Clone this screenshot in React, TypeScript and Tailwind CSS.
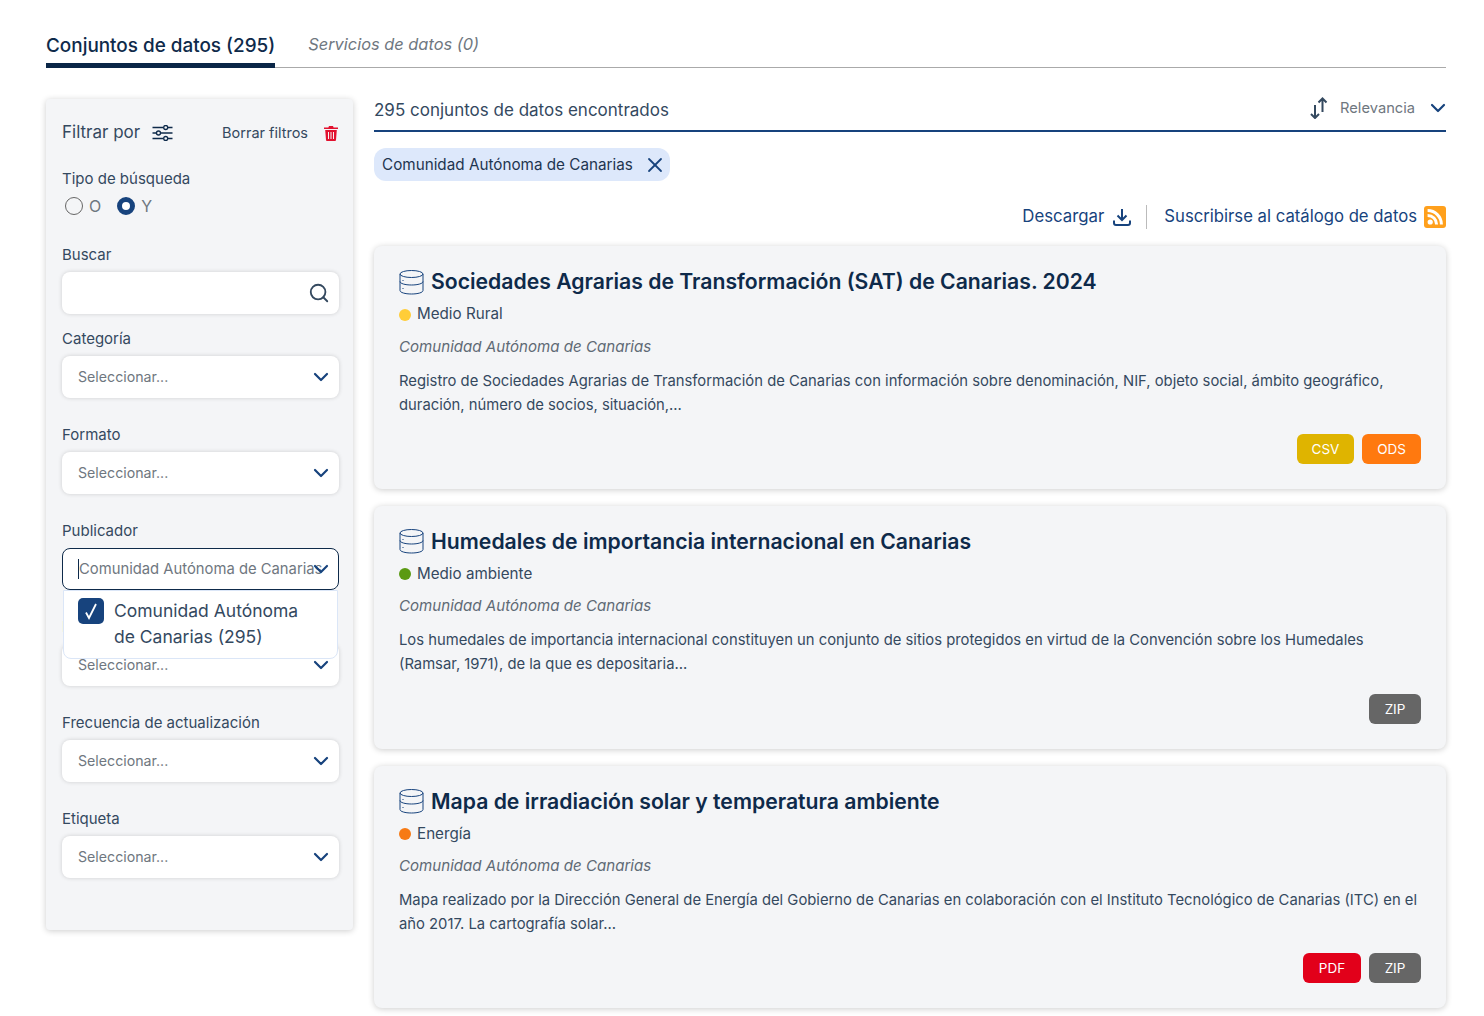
import { ChevronDown, Search, X } from "lucide-react";

const datasets = [
  {
    title: "Sociedades Agrarias de Transformación (SAT) de Canarias. 2024",
    category: "Medio Rural",
    dot: "bg-[#ffcd38]",
    desc: "Registro de Sociedades Agrarias de Transformación de Canarias con información sobre denominación, NIF, objeto social, ámbito geográfico, duración, número de socios, situación,...",
    formats: [
      { label: "CSV", color: "bg-[#dfb400]", width: "w-[57px]" },
      { label: "ODS", color: "bg-[#ff790f]", width: "w-[59px]" },
    ],
  },
  {
    title: "Humedales de importancia internacional en Canarias",
    category: "Medio ambiente",
    dot: "bg-[#5b9a12]",
    desc: "Los humedales de importancia internacional constituyen un conjunto de sitios protegidos en virtud de la Convención sobre los Humedales (Ramsar, 1971), de la que es depositaria...",
    formats: [{ label: "ZIP", color: "bg-[#666666]", width: "w-[52px]" }],
  },
  {
    title: "Mapa de irradiación solar y temperatura ambiente",
    category: "Energía",
    dot: "bg-[#f77a14]",
    desc: "Mapa realizado por la Dirección General de Energía del Gobierno de Canarias en colaboración con el Instituto Tecnológico de Canarias (ITC) en el año 2017. La cartografía solar...",
    formats: [
      { label: "PDF", color: "bg-[#e2001a]", width: "w-[58px]" },
      { label: "ZIP", color: "bg-[#666666]", width: "w-[52px]" },
    ],
  },
];

function DatabaseIcon() {
  return (
    <svg width="25" height="25" viewBox="0 0 25 25" fill="none" stroke="#17437d" strokeWidth="1" className="shrink-0">
      <ellipse cx="12.5" cy="4" rx="11.5" ry="3.5" />
      <path d="M1 4v16.5c0 2 5 3.5 11.5 3.5s11.5-1.5 11.5-3.5V4" />
      <path d="M1 11.5c0 2 5 3.5 11.5 3.5s11.5-1.5 11.5-3.5" />
      <path d="M3.5 10.5h1M3.5 18.5h1" />
    </svg>
  );
}

function SlidersIcon() {
  return (
    <svg width="21" height="16" viewBox="0 0 21 16" fill="none" stroke="#0e2a4a" strokeWidth="1.3">
      <path d="M0.5 2.5h11M16 2.5h4.5M0.5 8h4M8.5 8h12M0.5 13.5h11M16 13.5h4.5" />
      <circle cx="13.7" cy="2.5" r="2" />
      <circle cx="6.5" cy="8" r="2" />
      <circle cx="13.7" cy="13.5" r="2" />
    </svg>
  );
}

function TrashIcon() {
  return (
    <svg width="14" height="15" viewBox="0 0 14 15" fill="#e2112f">
      <path d="M5 0h4l.6 1.5H14V3H0V1.5h4.4L5 0z" />
      <path
        fillRule="evenodd"
        d="M1.2 4h11.6l-.8 10a1 1 0 0 1-1 1H3a1 1 0 0 1-1-1L1.2 4zM4 6v7h1V6H4zm2.5 0v7h1V6h-1zM9 6v7h1V6H9z"
      />
    </svg>
  );
}

function SortIcon() {
  return (
    <svg width="18" height="22" viewBox="0 0 18 22" fill="none" stroke="#34495f" strokeWidth="2">
      <path d="M5 8v13M1 17l4 4 4-4" />
      <path d="M12.5 15V1.5M8.5 5.5l4-4 4 4" />
    </svg>
  );
}

function DownloadIcon() {
  return (
    <svg width="18" height="18" viewBox="0 0 18 18" fill="none" stroke="#17437d" strokeWidth="2">
      <path d="M9 1v10.5M4.5 7.5 9 12l4.5-4.5" />
      <path d="M1 12.5v2.5a2 2 0 0 0 2 2h12a2 2 0 0 0 2-2v-2.5" />
    </svg>
  );
}

function RssIcon() {
  return (
    <svg width="22" height="22" viewBox="0 0 22 22">
      <rect width="22" height="22" rx="3" fill="#ffa01c" />
      <circle cx="6.2" cy="16" r="2.6" fill="#fff" />
      <path d="M3.6 9.4a9 9 0 0 1 9 9M3.6 4.6a13.8 13.8 0 0 1 13.8 13.8" fill="none" stroke="#fff" strokeWidth="3" />
    </svg>
  );
}

function Select({ label, className }: { label: string; className?: string }) {
  return (
    <div className={className}>
      <label className="mb-[6px] block h-[22px] text-[15px] leading-[22px] text-[#34495f]">{label}</label>
      <div className="flex h-[42px] items-center justify-between rounded-lg bg-white pl-4 pr-[6px] shadow-[0_0_4px_rgba(0,0,0,0.16)]">
        <span className="text-[14.2px] text-[#6f7780]">Seleccionar...</span>
        <ChevronDown size={24} strokeWidth={2.2} className="text-[#17437d]" />
      </div>
    </div>
  );
}

function Sidebar() {
  return (
    <aside className="h-[831px] w-[307px] shrink-0 rounded bg-[#f4f5f7] pl-4 pr-[14px] pt-[22px] shadow-[0_1px_6px_rgba(0,0,0,0.2)]">
      <div className="flex h-[24px] items-center justify-between pr-[1px]">
        <div className="flex items-center gap-3">
          <span className="text-[17px] text-[#34495f]">Filtrar por</span>
          <SlidersIcon />
        </div>
        <div className="flex items-center gap-[16px]">
          <span className="text-[14.5px] text-[#34495f]">Borrar filtros</span>
          <TrashIcon />
        </div>
      </div>

      <p className="mt-[23px] text-[15px] leading-[22px] text-[#34495f]">Tipo de búsqueda</p>
      <div className="mt-[4px] flex items-center pl-[3px]">
        <span className="h-[18px] w-[18px] rounded-full border-[1.5px] border-[#666]" />
        <span className="ml-[6px] text-[16px] text-[#6f7780]">O</span>
        <span className="ml-[16px] h-[18px] w-[18px] rounded-full border-[5px] border-[#17437d] bg-white" />
        <span className="ml-[6px] text-[16px] text-[#6f7780]">Y</span>
      </div>

      <p className="mb-[6px] mt-[26px] text-[15px] leading-[22px] text-[#34495f]">Buscar</p>
      <div className="flex h-[42px] items-center justify-end rounded-lg bg-white pr-[9px] shadow-[0_0_4px_rgba(0,0,0,0.16)]">
        <Search size={22} strokeWidth={2} className="text-[#34495f]" />
      </div>

      <Select label="Categoría" className="mt-[14px]" />
      <Select label="Formato" className="mt-[26px]" />

      <div className="relative z-10 mt-[26px]">
        <label className="mb-[6px] block h-[22px] text-[15px] leading-[22px] text-[#34495f]">Publicador</label>
        <div className="flex h-[42px] items-center justify-between rounded-lg border border-[#0e2a4a] bg-white pl-[15px] pr-[5px]">
          <span className="whitespace-nowrap border-l border-[#0e2a4a] text-[14.8px] leading-[20px] text-[#6f7780]">
            Comunidad Autónoma de Canarias
          </span>
          <ChevronDown size={24} strokeWidth={2.2} className="-ml-[24px] shrink-0 text-[#17437d]" />
        </div>
        <div className="absolute left-[1px] right-[1px] top-[70px] flex gap-[10px] rounded-b-lg border border-[#dbe6f7] bg-white pb-[8px] pl-[14px] pt-[7px]">
          <span className="flex h-[26px] w-[26px] shrink-0 items-center justify-center rounded-[5px] bg-[#17437d]">
            <svg width="14" height="18" viewBox="0 0 14 18" fill="none" stroke="#fff" strokeWidth="1.8">
              <path d="M2 10.5 5 16 12 2" />
            </svg>
          </span>
          <span className="text-[17.5px] leading-[26px] text-[#34495f]">
            Comunidad Autónoma
            <br />
            de Canarias (295)
          </span>
        </div>
      </div>

      <Select label="Nivel" className="mt-[26px]" />
      <Select label="Frecuencia de actualización" className="mt-[26px]" />
      <Select label="Etiqueta" className="mt-[26px]" />
    </aside>
  );
}

function DatasetCard({ data }: { data: (typeof datasets)[0] }) {
  return (
    <article className="flex h-[242.67px] flex-col rounded-lg bg-[#f4f5f7] px-[25px] pt-[23px] shadow-[0_1px_6px_rgba(0,0,0,0.2)]">
      <div className="flex h-[26px] items-center gap-[7px]">
        <DatabaseIcon />
        <h2 className="text-[21.2px] font-semibold text-[#0e2a4a]">{data.title}</h2>
      </div>
      <div className="mt-[7.3px] flex h-[24px] items-center gap-[6px]">
        <span className={`h-[12px] w-[12px] rounded-full ${data.dot}`} />
        <span className="text-[15.2px] text-[#34495f]">{data.category}</span>
      </div>
      <p className="mt-[8px] h-[24px] text-[15.1px] italic leading-[24px] text-[#5f6a75]">Comunidad Autónoma de Canarias</p>
      <p className="mt-[10px] text-[14.8px] leading-[24px] text-[#34495f]">{data.desc}</p>
      <div className="mt-auto mb-[25px] flex justify-end gap-[8px]">
        {data.formats.map((f) => (
          <span
            key={f.label}
            className={`flex h-[30px] items-center justify-center rounded-md text-[13.5px] text-white ${f.color} ${f.width}`}
          >
            {f.label}
          </span>
        ))}
      </div>
    </article>
  );
}

export default function App() {
  return (
    <div className="min-h-screen bg-white pl-[46px] pr-[38px] pt-[28px] font-['Inter',sans-serif]">
      <nav className="flex h-[40px] items-end border-b border-[#aaaaaa]">
        <div className="-mb-px flex h-[41px] items-center border-b-[5px] border-[#0a2647] pt-[3px] text-[18.9px] font-medium text-[#0e2a4a]">
          Conjuntos de datos (295)
        </div>
        <div className="ml-[33px] h-[41px] pt-[6px] text-[16.4px] italic text-[#6f7780]">Servicios de datos (0)</div>
      </nav>

      <div className="mt-[31px] flex gap-[21px]">
        <Sidebar />
        <main className="min-w-0 flex-1">
          <div className="flex h-[33px] items-start justify-between border-b-2 border-[#17437d]">
            <span className="-mt-[1px] text-[17px] text-[#34495f]">295 conjuntos de datos encontrados</span>
            <div className="-mr-[4px] -mt-[3px] flex items-center">
              <SortIcon />
              <span className="ml-[12px] text-[14.7px] text-[#6f7780]">Relevancia</span>
              <ChevronDown size={24} strokeWidth={2.2} className="ml-[11px] text-[#17437d]" />
            </div>
          </div>

          <div className="mt-[16px] inline-flex h-[33px] items-center gap-[10px] rounded-xl bg-[#dde8fb] pl-2 pr-[3px] align-top">
            <span className="pt-[1px] text-[15.25px] text-[#1f3550]">Comunidad Autónoma de Canarias</span>
            <X size={24} strokeWidth={1.8} className="text-[#17437d]" />
          </div>

          <div className="mt-[24px] flex h-[24px] items-center justify-end">
            <span className="text-[16.8px] text-[#17437d]">Descargar</span>
            <span className="ml-[9px]">
              <DownloadIcon />
            </span>
            <span className="ml-[15px] h-[24px] w-px bg-[#bbbbbb]" />
            <span className="ml-[17px] text-[16.7px] text-[#17437d]">Suscribirse al catálogo de datos</span>
            <span className="ml-[7px]">
              <RssIcon />
            </span>
          </div>

          <div className="mt-[17.33px] flex flex-col gap-[17px]">
            {datasets.map((d) => (
              <DatasetCard key={d.title} data={d} />
            ))}
          </div>
        </main>
      </div>
    </div>
  );
}
